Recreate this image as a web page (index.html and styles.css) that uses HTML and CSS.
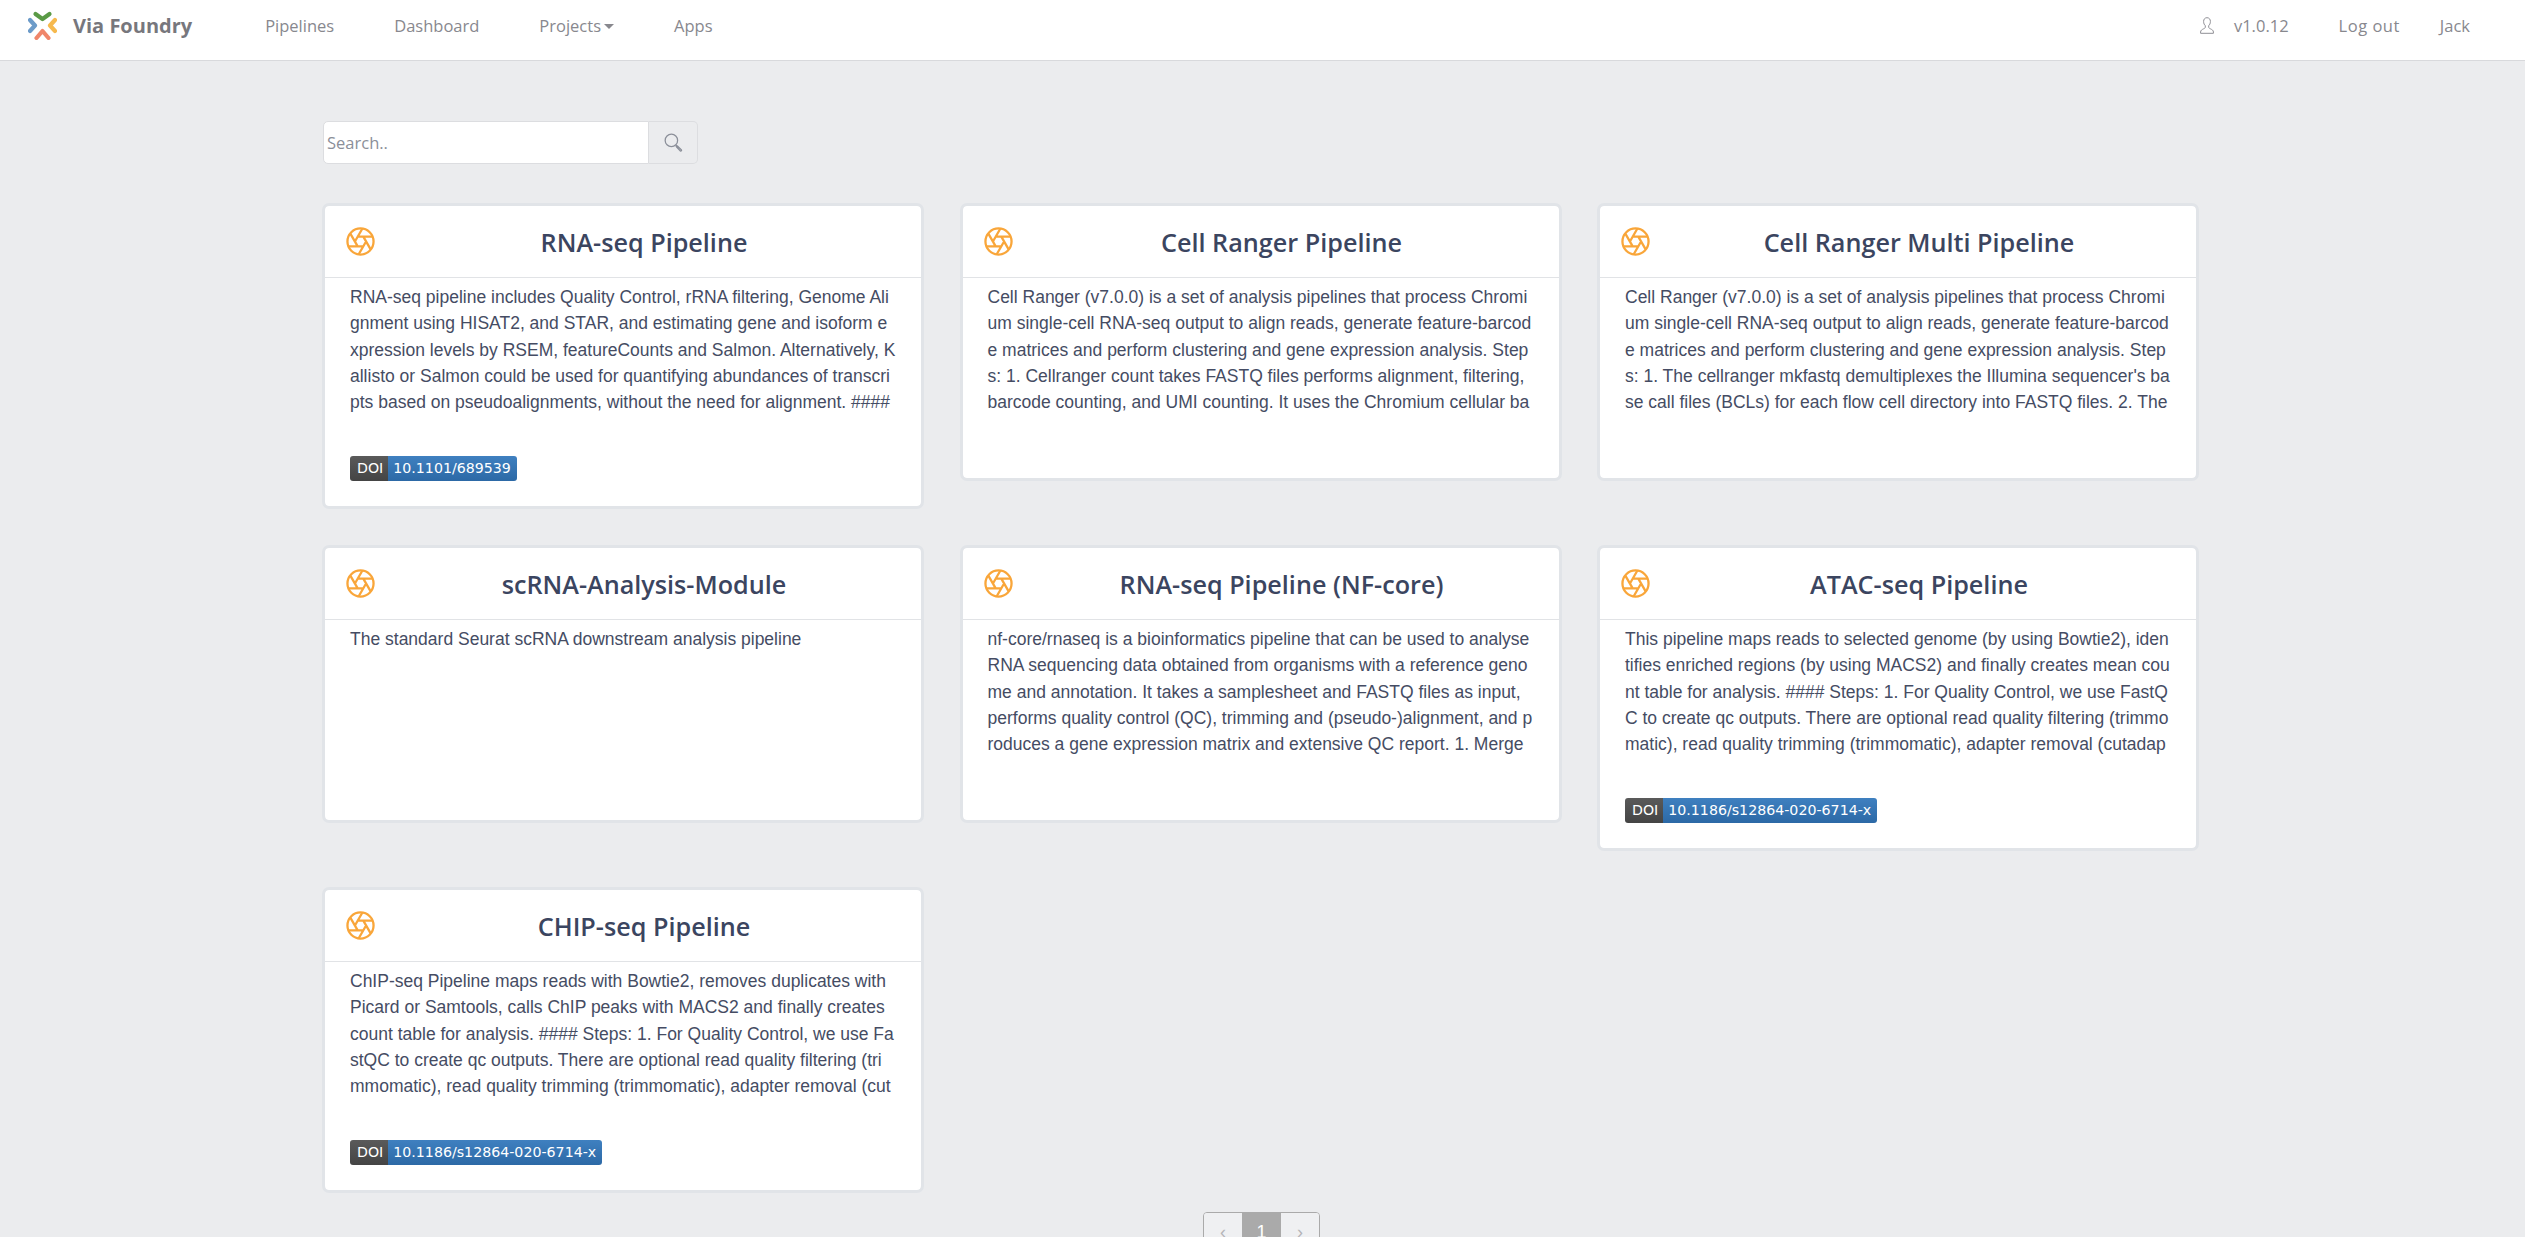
FILE: index.html

```html
<!DOCTYPE html>
<html lang="en">
<head>
    <meta charset="UTF-8">
    <title>Via Foundry</title>
    <link rel="stylesheet" href="styles.css">
</head>
<body>
    <svg class="defs" width="0" height="0">
        <symbol id="aperture" viewBox="0 0 24 24">
            <circle cx="12" cy="12" r="10.8"/>
            <path d="M14.31 8l5.74 9.94M9.69 8h11.48M7.38 12l5.74-9.94M9.69 16L3.95 6.06M14.31 16H2.83M16.62 12l-5.74 9.94"/>
        </symbol>
    </svg>

    <nav class="navbar">
        <a class="brand">
            <svg class="logo" viewBox="0 0 29 29">
                <path class="logo-green" d="M7.500 3l7 5 7-5"/>
                <path class="logo-blue" d="M2 9l5 5.500L2 20"/>
                <path class="logo-orange" d="M27 9l-5 5.500 5 5.500"/>
                <path class="logo-red" d="M8.500 27l6-7 6 7"/>
            </svg>
            <span>Via Foundry</span>
        </a>
        <div class="nav-links">
            <a>Pipelines</a>
            <a>Dashboard</a>
            <a>Projects<i class="caret"></i></a>
            <a>Apps</a>
        </div>
        <div class="nav-right">
            <svg class="user-icon" viewBox="0 0 14 17">
                <path d="M7 .7c-2.200 0-3.400 1.600-3.400 3.800 0 1.800.7 3.300 1.700 4.200v1.500c0 .7-.6 1.100-1.700 1.600C2 12.600.6 13.300.6 15v1.300h12.800V15c0-1.700-1.400-2.400-3-3.200-1.100-.5-1.700-.9-1.700-1.600V8.700c1-.9 1.700-2.400 1.700-4.200C10.400 2.300 9.200.7 7 .7z"/>
            </svg>
            <a class="version">v1.0.12</a>
            <a class="logout">Log out</a>
            <a>Jack</a>
        </div>
    </nav>

    <main class="content">
        <form class="search">
            <input type="text" placeholder="Search..">
            <button type="button">
                <svg viewBox="0 0 18 18">
                    <circle cx="7" cy="7" r="5.900"/>
                    <path d="M11.300 11.300l1.700 1.200 3.500 3.500c.4.700-.3 1.400-1 1l-3.500-3.700-.9-1.500"/>
                </svg>
            </button>
        </form>

        <div class="cards">
            <div class="card">
                <div class="card-head">
                    <svg class="card-icon"><use href="#aperture"/></svg>
                    <h3>RNA-seq Pipeline</h3>
                </div>
                <div class="card-body">
                    <p>RNA-seq pipeline includes Quality Control, rRNA filtering, Genome Ali<br>gnment using HISAT2, and STAR, and estimating gene and isoform e<br>xpression levels by RSEM, featureCounts and Salmon. Alternatively, K<br>allisto or Salmon could be used for quantifying abundances of transcri<br>pts based on pseudoalignments, without the need for alignment. ####</p>
                    <div class="card-foot"><span class="doi"><b>DOI</b><em>10.1101/689539</em></span></div>
                </div>
            </div>

            <div class="card">
                <div class="card-head">
                    <svg class="card-icon"><use href="#aperture"/></svg>
                    <h3>Cell Ranger Pipeline</h3>
                </div>
                <div class="card-body">
                    <p>Cell Ranger (v7.0.0) is a set of analysis pipelines that process Chromi<br>um single-cell RNA-seq output to align reads, generate feature-barcod<br>e matrices and perform clustering and gene expression analysis. Step<br>s: 1. Cellranger count takes FASTQ files performs alignment, filtering,<br>barcode counting, and UMI counting. It uses the Chromium cellular ba</p>
                    <div class="card-foot"></div>
                </div>
            </div>

            <div class="card">
                <div class="card-head">
                    <svg class="card-icon"><use href="#aperture"/></svg>
                    <h3>Cell Ranger Multi Pipeline</h3>
                </div>
                <div class="card-body">
                    <p>Cell Ranger (v7.0.0) is a set of analysis pipelines that process Chromi<br>um single-cell RNA-seq output to align reads, generate feature-barcod<br>e matrices and perform clustering and gene expression analysis. Step<br>s: 1. The cellranger mkfastq demultiplexes the Illumina sequencer's ba<br>se call files (BCLs) for each flow cell directory into FASTQ files. 2. The</p>
                    <div class="card-foot"></div>
                </div>
            </div>

            <div class="card">
                <div class="card-head">
                    <svg class="card-icon"><use href="#aperture"/></svg>
                    <h3>scRNA-Analysis-Module</h3>
                </div>
                <div class="card-body">
                    <p>The standard Seurat scRNA downstream analysis pipeline</p>
                    <div class="card-foot"></div>
                </div>
            </div>

            <div class="card">
                <div class="card-head">
                    <svg class="card-icon"><use href="#aperture"/></svg>
                    <h3>RNA-seq Pipeline (NF-core)</h3>
                </div>
                <div class="card-body">
                    <p>nf-core/rnaseq is a bioinformatics pipeline that can be used to analyse<br>RNA sequencing data obtained from organisms with a reference geno<br>me and annotation. It takes a samplesheet and FASTQ files as input,<br>performs quality control (QC), trimming and (pseudo-)alignment, and p<br>roduces a gene expression matrix and extensive QC report. 1. Merge</p>
                    <div class="card-foot"></div>
                </div>
            </div>

            <div class="card">
                <div class="card-head">
                    <svg class="card-icon"><use href="#aperture"/></svg>
                    <h3>ATAC-seq Pipeline</h3>
                </div>
                <div class="card-body">
                    <p>This pipeline maps reads to selected genome (by using Bowtie2), iden<br>tifies enriched regions (by using MACS2) and finally creates mean cou<br>nt table for analysis. #### Steps: 1. For Quality Control, we use FastQ<br>C to create qc outputs. There are optional read quality filtering (trimmo<br>matic), read quality trimming (trimmomatic), adapter removal (cutadap</p>
                    <div class="card-foot"><span class="doi"><b>DOI</b><em>10.1186/s12864-020-6714-x</em></span></div>
                </div>
            </div>

            <div class="card">
                <div class="card-head">
                    <svg class="card-icon"><use href="#aperture"/></svg>
                    <h3>CHIP-seq Pipeline</h3>
                </div>
                <div class="card-body">
                    <p>ChIP-seq Pipeline maps reads with Bowtie2, removes duplicates with<br>Picard or Samtools, calls ChIP peaks with MACS2 and finally creates<br>count table for analysis. #### Steps: 1. For Quality Control, we use Fa<br>stQC to create qc outputs. There are optional read quality filtering (tri<br>mmomatic), read quality trimming (trimmomatic), adapter removal (cut</p>
                    <div class="card-foot"><span class="doi"><b>DOI</b><em>10.1186/s12864-020-6714-x</em></span></div>
                </div>
            </div>
        </div>

        <div class="pager">
            <a>‹</a>
            <a class="active">1</a>
            <a>›</a>
        </div>
    </main>
</body>
</html>
```

FILE: styles.css

```css
html, body { height: 100%; overflow: hidden; }
body { margin: 0; background: #ebecee; font-family: "Liberation Sans", Arial, sans-serif; color: #454c63; }
.defs { position: absolute; }

.navbar { display: flex; align-items: center; height: 61px; padding: 0 55px 10px 28px; box-sizing: border-box; background: #fff; border-bottom: 1px solid #d8d9dc; font-family: "Open Sans", sans-serif; font-size: 16.500px; color: #88888e; }
.brand { display: flex; align-items: center; gap: 16px; font-size: 20px; font-weight: 700; color: #77777d; }
.logo { width: 29px; height: 29px; fill: none; stroke-width: 4.200; stroke-linecap: round; stroke-linejoin: round; }
.logo-green { stroke: #5a9a46; }
.logo-blue { stroke: #6c9bc9; }
.logo-orange { stroke: #f6b94e; }
.logo-red { stroke: #f0866a; }
.nav-links { display: flex; gap: 60px; margin-left: 73px; }
.caret { display: inline-block; margin-left: 3px; vertical-align: 3px; border-top: 5px solid currentColor; border-left: 5px solid transparent; border-right: 5px solid transparent; }
.nav-right { display: flex; align-items: center; margin-left: auto; }
.user-icon { width: 14px; height: 17px; margin-right: 20px; fill: none; stroke: #8f8f95; stroke-width: 1; }
.version { margin-right: 50px; }
.logout { margin-right: 40px; letter-spacing: .5px; }

.content { width: 1876px; margin-left: 323px; }
.search { display: flex; height: 43px; margin: 60px 0 39px; }
.search input { width: 326px; box-sizing: border-box; padding: 0 3px; border: 1px solid #dcdde0; border-radius: 5px 0 0 5px; background: #fff; font-family: "Open Sans", sans-serif; font-size: 16.500px; }
.search input::placeholder { color: #8b8f99; opacity: 1; }
.search button { width: 49px; padding: 0; border: 1px solid #dcdde0; border-left: 0; border-radius: 0 5px 5px 0; background: #ebecee; }
.search svg { display: block; width: 19px; height: 19px; margin: 0 auto; fill: none; stroke: #8b8f99; stroke-width: 1.200; }

.cards { display: grid; grid-template-columns: repeat(3, 602px); gap: 36px 35.500px; align-items: start; margin-left: -1px; }
.card { box-sizing: border-box; border: 3px solid #e1e4e8; border-radius: 7px; background: #fff; background-clip: padding-box; }
.card-head { display: flex; align-items: center; height: 71px; padding-left: 21px; border-bottom: 1px solid #e1e3e6; }
.card-icon { flex: none; width: 29px; height: 29px; fill: none; stroke: #f9a63a; stroke-width: 1.900; stroke-linecap: round; stroke-linejoin: round; }
.card-head h3 { flex: 1; margin: 0; padding-right: 8px; text-align: center; font-family: "Open Sans", sans-serif; font-size: 25.200px; font-weight: 600; color: #3b4560; }
.card-body { padding: 6px 20px 0 25px; }
.card-body p { height: 132px; margin: 0; white-space: nowrap; font-size: 17.500px; line-height: 26.250px; }
.card-foot { padding: 40px 0 22px; }
.doi { display: flex; width: max-content; height: 25px; margin-bottom: 3px; border-radius: 3px; overflow: hidden; font-family: "DejaVu Sans", sans-serif; font-size: 14.200px; line-height: 25px; color: #fff; }
.doi b { padding: 0 5px 0 7px; font-weight: 400; background: linear-gradient(#5a5a5a, #444); }
.doi em { padding: 0 6px 0 5px; font-style: normal; background: linear-gradient(#3f80c0, #2c69a6); }

.pager { display: flex; width: max-content; margin: 19px 0 0 880px; border: 1px solid #aaa; border-radius: 4px; overflow: hidden; }
.pager a { width: 38px; height: 40px; text-align: center; line-height: 38px; font-size: 18px; background: #eff0f2; color: #b5b5b8; }
.pager .active { width: 39px; background: #aaa; color: #fff; }
```
